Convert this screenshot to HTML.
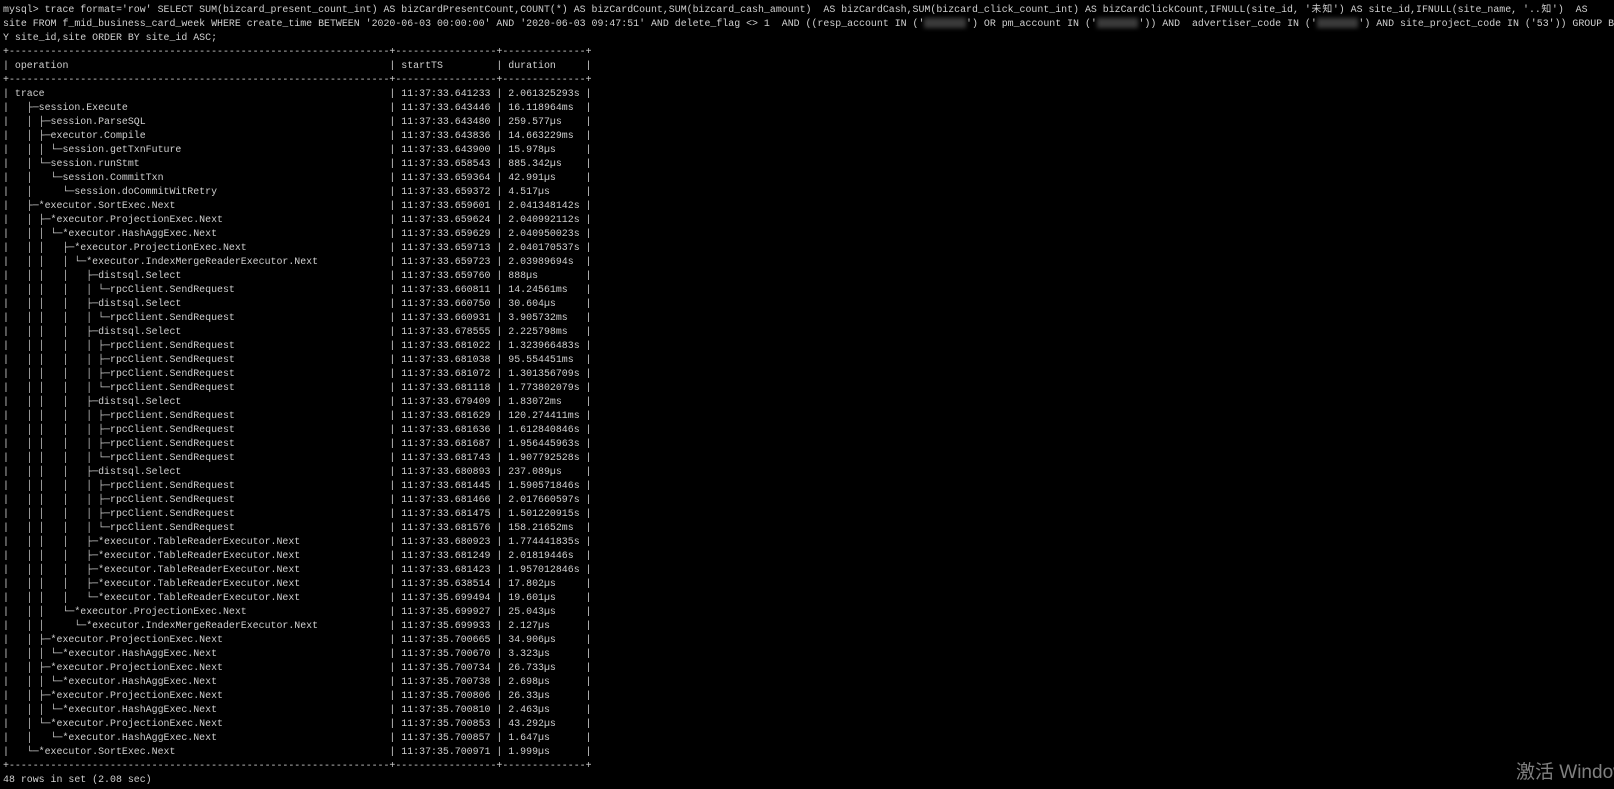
<!DOCTYPE html>
<html><head><meta charset="utf-8"><style>
html,body{margin:0;padding:0;background:#000;width:1614px;height:789px;overflow:hidden}
pre{position:absolute;left:3px;top:2.5px;margin:0;font-family:"Liberation Mono","Noto Sans CJK SC",monospace;font-size:9.92px;line-height:14.02px;color:#d0d0d0;white-space:pre}
.op{display:inline-block;width:62ch}
.ts{display:inline-block;width:15ch}
.du{display:inline-block;width:12ch}
.cj{display:inline-block;width:2ch;text-align:center;font-family:"Noto Sans CJK SC",sans-serif;line-height:10px}
.bl{display:inline-block;width:7ch;height:10px;vertical-align:middle;background:#3a3a3a;filter:blur(2px)}
.wm{position:absolute;left:1516px;top:757px;font-family:"Liberation Sans","Noto Sans CJK SC",sans-serif;font-size:19px;color:#808080;white-space:nowrap}
</style></head><body>
<pre>mysql&gt; trace format='row' SELECT SUM(bizcard_present_count_int) AS bizCardPresentCount,COUNT(*) AS bizCardCount,SUM(bizcard_cash_amount)  AS bizCardCash,SUM(bizcard_click_count_int) AS bizCardClickCount,IFNULL(site_id, '<span class="cj">未</span><span class="cj">知</span>') AS site_id,IFNULL(site_name, '..<span class="cj">知</span>')  AS
site FROM f_mid_business_card_week WHERE create_time BETWEEN '2020-06-03 00:00:00' AND '2020-06-03 09:47:51' AND delete_flag &lt;&gt; 1  AND ((resp_account IN ('<span class="bl"></span>') OR pm_account IN ('<span class="bl"></span>')) AND  advertiser_code IN ('<span class="bl"></span>') AND site_project_code IN ('53')) GROUP B
Y site_id,site ORDER BY site_id ASC;
+----------------------------------------------------------------+-----------------+--------------+
| <span class="op">operation</span> | <span class="ts">startTS</span> | <span class="du">duration</span> |
+----------------------------------------------------------------+-----------------+--------------+
| <span class="op">trace</span> | 11:37:33.641233 | <span class="du">2.061325293s</span> |
| <span class="op">  ├─session.Execute</span> | 11:37:33.643446 | <span class="du">16.118964ms</span> |
| <span class="op">  │ ├─session.ParseSQL</span> | 11:37:33.643480 | <span class="du">259.577µs</span> |
| <span class="op">  │ ├─executor.Compile</span> | 11:37:33.643836 | <span class="du">14.663229ms</span> |
| <span class="op">  │ │ └─session.getTxnFuture</span> | 11:37:33.643900 | <span class="du">15.978µs</span> |
| <span class="op">  │ └─session.runStmt</span> | 11:37:33.658543 | <span class="du">885.342µs</span> |
| <span class="op">  │   └─session.CommitTxn</span> | 11:37:33.659364 | <span class="du">42.991µs</span> |
| <span class="op">  │     └─session.doCommitWitRetry</span> | 11:37:33.659372 | <span class="du">4.517µs</span> |
| <span class="op">  ├─*executor.SortExec.Next</span> | 11:37:33.659601 | <span class="du">2.041348142s</span> |
| <span class="op">  │ ├─*executor.ProjectionExec.Next</span> | 11:37:33.659624 | <span class="du">2.040992112s</span> |
| <span class="op">  │ │ └─*executor.HashAggExec.Next</span> | 11:37:33.659629 | <span class="du">2.040950023s</span> |
| <span class="op">  │ │   ├─*executor.ProjectionExec.Next</span> | 11:37:33.659713 | <span class="du">2.040170537s</span> |
| <span class="op">  │ │   │ └─*executor.IndexMergeReaderExecutor.Next</span> | 11:37:33.659723 | <span class="du">2.03989694s</span> |
| <span class="op">  │ │   │   ├─distsql.Select</span> | 11:37:33.659760 | <span class="du">888µs</span> |
| <span class="op">  │ │   │   │ └─rpcClient.SendRequest</span> | 11:37:33.660811 | <span class="du">14.24561ms</span> |
| <span class="op">  │ │   │   ├─distsql.Select</span> | 11:37:33.660750 | <span class="du">30.604µs</span> |
| <span class="op">  │ │   │   │ └─rpcClient.SendRequest</span> | 11:37:33.660931 | <span class="du">3.905732ms</span> |
| <span class="op">  │ │   │   ├─distsql.Select</span> | 11:37:33.678555 | <span class="du">2.225798ms</span> |
| <span class="op">  │ │   │   │ ├─rpcClient.SendRequest</span> | 11:37:33.681022 | <span class="du">1.323966483s</span> |
| <span class="op">  │ │   │   │ ├─rpcClient.SendRequest</span> | 11:37:33.681038 | <span class="du">95.554451ms</span> |
| <span class="op">  │ │   │   │ ├─rpcClient.SendRequest</span> | 11:37:33.681072 | <span class="du">1.301356709s</span> |
| <span class="op">  │ │   │   │ └─rpcClient.SendRequest</span> | 11:37:33.681118 | <span class="du">1.773802079s</span> |
| <span class="op">  │ │   │   ├─distsql.Select</span> | 11:37:33.679409 | <span class="du">1.83072ms</span> |
| <span class="op">  │ │   │   │ ├─rpcClient.SendRequest</span> | 11:37:33.681629 | <span class="du">120.274411ms</span> |
| <span class="op">  │ │   │   │ ├─rpcClient.SendRequest</span> | 11:37:33.681636 | <span class="du">1.612840846s</span> |
| <span class="op">  │ │   │   │ ├─rpcClient.SendRequest</span> | 11:37:33.681687 | <span class="du">1.956445963s</span> |
| <span class="op">  │ │   │   │ └─rpcClient.SendRequest</span> | 11:37:33.681743 | <span class="du">1.907792528s</span> |
| <span class="op">  │ │   │   ├─distsql.Select</span> | 11:37:33.680893 | <span class="du">237.089µs</span> |
| <span class="op">  │ │   │   │ ├─rpcClient.SendRequest</span> | 11:37:33.681445 | <span class="du">1.590571846s</span> |
| <span class="op">  │ │   │   │ ├─rpcClient.SendRequest</span> | 11:37:33.681466 | <span class="du">2.017660597s</span> |
| <span class="op">  │ │   │   │ ├─rpcClient.SendRequest</span> | 11:37:33.681475 | <span class="du">1.501220915s</span> |
| <span class="op">  │ │   │   │ └─rpcClient.SendRequest</span> | 11:37:33.681576 | <span class="du">158.21652ms</span> |
| <span class="op">  │ │   │   ├─*executor.TableReaderExecutor.Next</span> | 11:37:33.680923 | <span class="du">1.774441835s</span> |
| <span class="op">  │ │   │   ├─*executor.TableReaderExecutor.Next</span> | 11:37:33.681249 | <span class="du">2.01819446s</span> |
| <span class="op">  │ │   │   ├─*executor.TableReaderExecutor.Next</span> | 11:37:33.681423 | <span class="du">1.957012846s</span> |
| <span class="op">  │ │   │   ├─*executor.TableReaderExecutor.Next</span> | 11:37:35.638514 | <span class="du">17.802µs</span> |
| <span class="op">  │ │   │   └─*executor.TableReaderExecutor.Next</span> | 11:37:35.699494 | <span class="du">19.601µs</span> |
| <span class="op">  │ │   └─*executor.ProjectionExec.Next</span> | 11:37:35.699927 | <span class="du">25.043µs</span> |
| <span class="op">  │ │     └─*executor.IndexMergeReaderExecutor.Next</span> | 11:37:35.699933 | <span class="du">2.127µs</span> |
| <span class="op">  │ ├─*executor.ProjectionExec.Next</span> | 11:37:35.700665 | <span class="du">34.906µs</span> |
| <span class="op">  │ │ └─*executor.HashAggExec.Next</span> | 11:37:35.700670 | <span class="du">3.323µs</span> |
| <span class="op">  │ ├─*executor.ProjectionExec.Next</span> | 11:37:35.700734 | <span class="du">26.733µs</span> |
| <span class="op">  │ │ └─*executor.HashAggExec.Next</span> | 11:37:35.700738 | <span class="du">2.698µs</span> |
| <span class="op">  │ ├─*executor.ProjectionExec.Next</span> | 11:37:35.700806 | <span class="du">26.33µs</span> |
| <span class="op">  │ │ └─*executor.HashAggExec.Next</span> | 11:37:35.700810 | <span class="du">2.463µs</span> |
| <span class="op">  │ └─*executor.ProjectionExec.Next</span> | 11:37:35.700853 | <span class="du">43.292µs</span> |
| <span class="op">  │   └─*executor.HashAggExec.Next</span> | 11:37:35.700857 | <span class="du">1.647µs</span> |
| <span class="op">  └─*executor.SortExec.Next</span> | 11:37:35.700971 | <span class="du">1.999µs</span> |
+----------------------------------------------------------------+-----------------+--------------+
48 rows in set (2.08 sec)
</pre>
<div class="wm">激活 Windows</div>
</body></html>
